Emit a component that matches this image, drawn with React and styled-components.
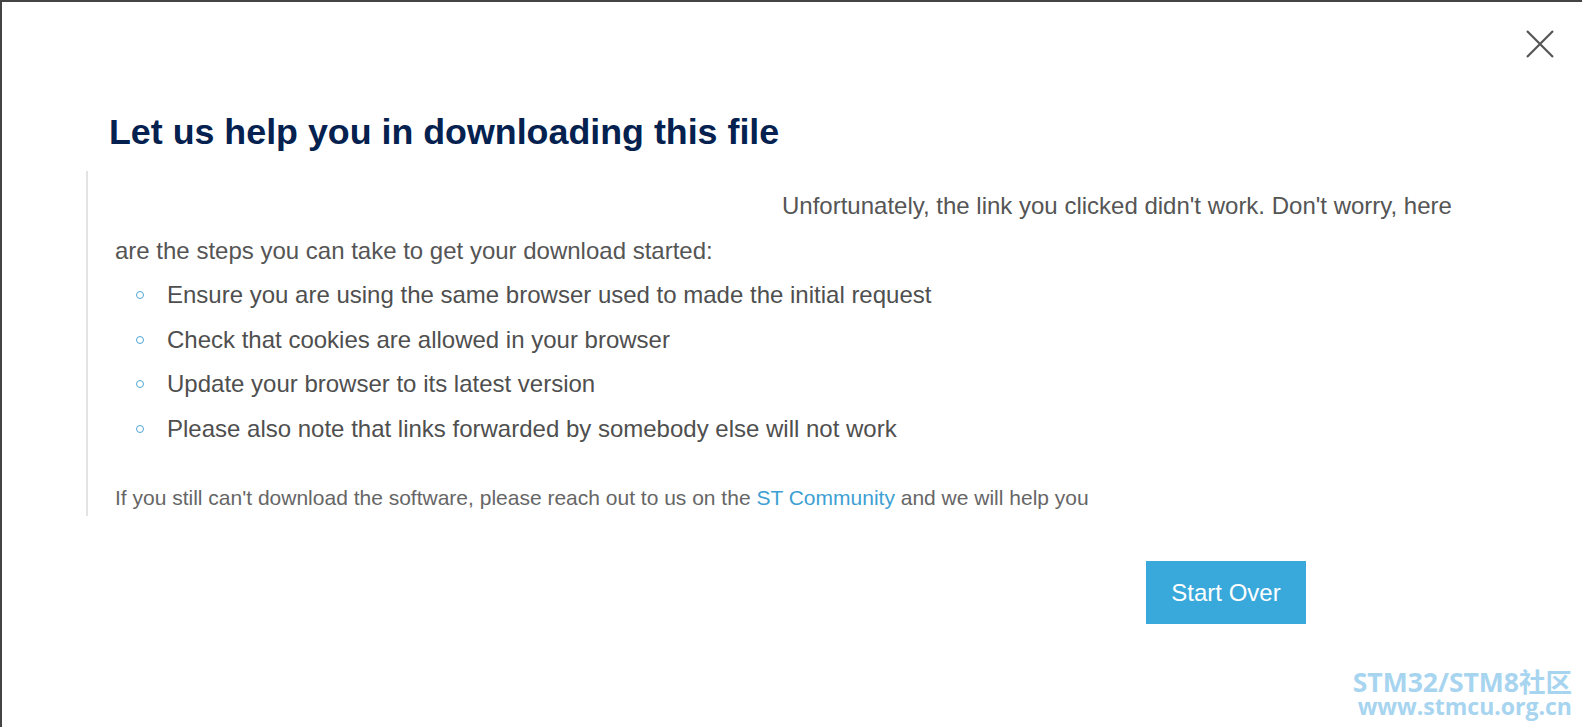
import React from "react";
import styled, { createGlobalStyle } from "styled-components";

const GlobalStyle = createGlobalStyle`
  html, body {
    margin: 0;
    padding: 0;
    background: #444;
  }
  #root {
    font-family: "Liberation Sans", Arial, sans-serif;
  }
`;

const Backdrop = styled.div`
  height: 727px;
  padding: 2px 0 0 2px;
  box-sizing: border-box;
  overflow: hidden;
`;

const Modal = styled.div`
  background: #fff;
  height: 100%;
  display: flex;
  flex-direction: column;
  padding: 0 0 0 84px;
  box-sizing: border-box;
`;

const TopBar = styled.div`
  display: flex;
  justify-content: flex-end;
  padding: 27px 27px 0 0;
`;

const CloseBtn = styled.button`
  border: none;
  background: none;
  padding: 0;
  width: 30px;
  height: 30px;
  cursor: pointer;
  color: #555;
`;

const Title = styled.h2`
  margin: 53px 0 0 23px;
  font-size: 35.8px;
  font-weight: 700;
  color: #04214f;
  line-height: 40px;
`;

const Body = styled.div`
  margin-top: 19px;
  border-left: 2px solid #e3e3e3;
  padding: 12px 0 0 27px;
  width: 1384px;
  box-sizing: border-box;
  color: #555;
`;

const Lead = styled.p`
  margin: 0;
  font-size: 24px;
  line-height: 45px;
  text-indent: 667px;
`;

const Steps = styled.ul`
  margin: 0;
  padding: 0;
  list-style: none;
`;

const Step = styled.li`
  font-size: 24px;
  line-height: 44.5px;
  color: #4f4f4f;
  &::before {
    content: "";
    display: inline-block;
    width: 6px;
    height: 6px;
    border: 1.5px solid #4fa6d3;
    border-radius: 50%;
    margin: 0 23px 0 21px;
    vertical-align: 4px;
  }
`;

const Note = styled.p`
  margin: 34px 0 0;
  padding-bottom: 5px;
  font-size: 21px;
  line-height: 26px;
  color: #666;
  a {
    color: #3d9fd3;
    text-decoration: none;
  }
`;

const Actions = styled.div`
  display: flex;
  padding: 45px 0 0 1060px;
`;

const PrimaryBtn = styled.button`
  width: 160px;
  height: 63px;
  border: none;
  background: #39a9dc;
  color: #fff;
  font-family: "Liberation Sans", Arial, sans-serif;
  font-size: 24px;
  cursor: pointer;
`;

const Watermark = styled.div`
  margin: auto 10px 9px auto;
  display: flex;
  flex-direction: column;
  align-items: flex-end;
  font-family: "Open Sans", "Noto Sans CJK SC", sans-serif;
  font-weight: 700;
  color: #a7d4ef;
`;

const MarkLine = styled.span`
  display: block;
  font-size: ${(p) => p.$size}px;
  line-height: 24px;
  height: 24px;
`;

const steps = [
  "Ensure you are using the same browser used to made the initial request",
  "Check that cookies are allowed in your browser",
  "Update your browser to its latest version",
  "Please also note that links forwarded by somebody else will not work",
];

export default function App() {
  return (
    <>
      <GlobalStyle />
      <Backdrop>
        <Modal>
          <TopBar>
            <CloseBtn aria-label="Close">
              <svg width="30" height="30" viewBox="0 0 30 30">
                <path
                  d="M2 2 L28 28 M28 2 L2 28"
                  stroke="currentColor"
                  strokeWidth="2.2"
                  fill="none"
                />
              </svg>
            </CloseBtn>
          </TopBar>
          <Title>Let us help you in downloading this file</Title>
          <Body>
            <Lead>
              Unfortunately, the link you clicked didn't work. Don't worry,
              here are the steps you can take to get your download started:
            </Lead>
            <Steps>
              {steps.map((s) => (
                <Step key={s}>{s}</Step>
              ))}
            </Steps>
            <Note>
              If you still can't download the software, please reach out to us
              on the <a href="#">ST Community</a> and we will help you
            </Note>
          </Body>
          <Actions>
            <PrimaryBtn>Start Over</PrimaryBtn>
          </Actions>
          <Watermark>
            <MarkLine $size={26.5}>STM32/STM8社区</MarkLine>
            <MarkLine $size={23}>www.stmcu.org.cn</MarkLine>
          </Watermark>
        </Modal>
      </Backdrop>
    </>
  );
}
